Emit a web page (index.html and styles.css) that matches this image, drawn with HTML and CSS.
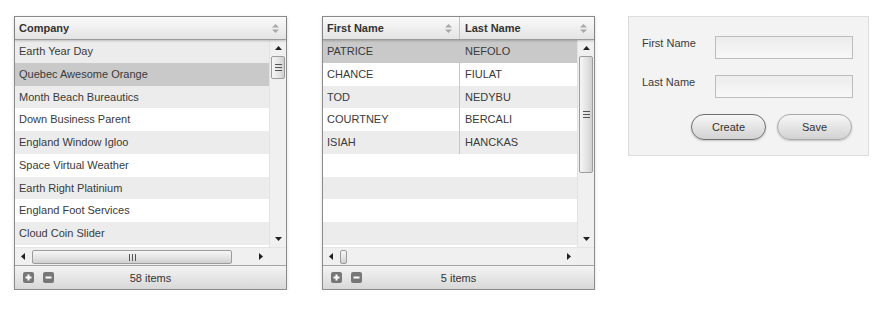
FILE: index.html
```html
<!DOCTYPE html>
<html lang="en">
<head>
    <meta charset="UTF-8">
    <title>Grids and form</title>
    <link rel="stylesheet" href="styles.css">
</head>
<body>
    <div class="page">
        <!-- companies grid -->
        <div class="grid">
            <div class="grid-head">
                <div class="col-head wide">Company
                    <svg class="sort" width="7" height="9" viewBox="0 0 7 9"><path d="M3.5 0L7 3.5H0z M3.5 9L0 5.5H7z" fill="#a8a8a8"/></svg>
                </div>
            </div>
            <div class="grid-body">
                <div class="rows">
                    <div class="row"><span class="cell">Earth Year Day</span></div>
                    <div class="row selected"><span class="cell">Quebec Awesome Orange</span></div>
                    <div class="row"><span class="cell">Month Beach Bureautics</span></div>
                    <div class="row"><span class="cell">Down Business Parent</span></div>
                    <div class="row"><span class="cell">England Window Igloo</span></div>
                    <div class="row"><span class="cell">Space Virtual Weather</span></div>
                    <div class="row"><span class="cell">Earth Right Platinium</span></div>
                    <div class="row"><span class="cell">England Foot Services</span></div>
                    <div class="row"><span class="cell">Cloud Coin Slider</span></div>
                    <div class="row"><span class="cell"></span></div>
                </div>
                <div class="vscroll">
                    <div class="arrow"><svg width="7" height="4"><path d="M3.5 0L7 4H0z" fill="#222"/></svg></div>
                    <div class="vtrack">
                        <div class="vthumb small"><svg width="7" height="7"><path d="M0 .5H7M0 3.5H7M0 6.5H7" stroke="#555"/></svg></div>
                    </div>
                    <div class="arrow"><svg width="7" height="4"><path d="M0 0H7L3.5 4z" fill="#222"/></svg></div>
                </div>
            </div>
            <div class="hscroll">
                <div class="harrow"><svg width="4" height="7"><path d="M0 3.5L4 0V7z" fill="#222"/></svg></div>
                <div class="htrack">
                    <div class="hthumb long"><svg width="7" height="7"><path d="M.5 0V7M3.5 0V7M6.5 0V7" stroke="#555"/></svg></div>
                </div>
                <div class="harrow"><svg width="4" height="7"><path d="M4 3.5L0 0V7z" fill="#222"/></svg></div>
                <div class="corner"></div>
            </div>
            <div class="grid-foot">
                <div class="tools">
                    <svg width="11" height="11" viewBox="0 0 11 11"><rect width="11" height="11" rx="2" fill="#777"/><path d="M5.5 2.5V8.5M2.5 5.5H8.5" stroke="#fff" stroke-width="2"/></svg>
                    <svg width="11" height="11" viewBox="0 0 11 11"><rect width="11" height="11" rx="2" fill="#777"/><path d="M2.5 5.5H8.5" stroke="#fff" stroke-width="2"/></svg>
                </div>
                <span class="count">58 items</span>
            </div>
        </div>

        <!-- people grid -->
        <div class="grid">
            <div class="grid-head">
                <div class="col-head first">First Name
                    <svg class="sort" width="7" height="9" viewBox="0 0 7 9"><path d="M3.5 0L7 3.5H0z M3.5 9L0 5.5H7z" fill="#a8a8a8"/></svg>
                </div>
                <div class="col-head wide second">Last Name
                    <svg class="sort" width="7" height="9" viewBox="0 0 7 9"><path d="M3.5 0L7 3.5H0z M3.5 9L0 5.5H7z" fill="#a8a8a8"/></svg>
                </div>
            </div>
            <div class="grid-body">
                <div class="rows">
                    <div class="row selected"><span class="cell first">PATRICE</span><span class="cell">NEFOLO</span></div>
                    <div class="row"><span class="cell first">CHANCE</span><span class="cell">FIULAT</span></div>
                    <div class="row"><span class="cell first">TOD</span><span class="cell">NEDYBU</span></div>
                    <div class="row"><span class="cell first">COURTNEY</span><span class="cell">BERCALI</span></div>
                    <div class="row"><span class="cell first">ISIAH</span><span class="cell">HANCKAS</span></div>
                    <div class="row"><span class="cell first"></span><span class="cell"></span></div>
                    <div class="row"><span class="cell first"></span><span class="cell"></span></div>
                    <div class="row"><span class="cell first"></span><span class="cell"></span></div>
                    <div class="row"><span class="cell first"></span><span class="cell"></span></div>
                    <div class="row"><span class="cell first"></span><span class="cell"></span></div>
                </div>
                <div class="vscroll">
                    <div class="arrow"><svg width="7" height="4"><path d="M3.5 0L7 4H0z" fill="#222"/></svg></div>
                    <div class="vtrack">
                        <div class="vthumb big"><svg width="7" height="7"><path d="M0 .5H7M0 3.5H7M0 6.5H7" stroke="#555"/></svg></div>
                    </div>
                    <div class="arrow"><svg width="7" height="4"><path d="M0 0H7L3.5 4z" fill="#222"/></svg></div>
                </div>
            </div>
            <div class="hscroll">
                <div class="harrow"><svg width="4" height="7"><path d="M0 3.5L4 0V7z" fill="#222"/></svg></div>
                <div class="htrack">
                    <div class="hthumb tiny"></div>
                </div>
                <div class="harrow"><svg width="4" height="7"><path d="M4 3.5L0 0V7z" fill="#222"/></svg></div>
                <div class="corner"></div>
            </div>
            <div class="grid-foot">
                <div class="tools">
                    <svg width="11" height="11" viewBox="0 0 11 11"><rect width="11" height="11" rx="2" fill="#777"/><path d="M5.5 2.5V8.5M2.5 5.5H8.5" stroke="#fff" stroke-width="2"/></svg>
                    <svg width="11" height="11" viewBox="0 0 11 11"><rect width="11" height="11" rx="2" fill="#777"/><path d="M2.5 5.5H8.5" stroke="#fff" stroke-width="2"/></svg>
                </div>
                <span class="count">5 items</span>
            </div>
        </div>

        <!-- edit form -->
        <div class="form">
            <div class="field">
                <label>First Name</label>
                <input type="text" class="input">
            </div>
            <div class="field">
                <label>Last Name</label>
                <input type="text" class="input">
            </div>
            <div class="buttons">
                <button class="btn active">Create</button>
                <button class="btn">Save</button>
            </div>
        </div>
    </div>
</body>
</html>
```

FILE: styles.css
```css
body { margin: 0; font-family: "Liberation Sans", Arial, sans-serif; font-size: 11px; color: #3a3a3a; background: #fff; }
.page { display: flex; align-items: flex-start; padding: 16px 0 0 14px; gap: 35px; }

.grid { width: 271px; border: 1px solid #8c8c8c; display: flex; flex-direction: column; box-shadow: 0 1px 3px rgba(0,0,0,0.15); }
.grid-head { display: flex; height: 22px; border-bottom: 1px solid #9a9a9a; background: linear-gradient(#fafafa, #e4e4e4); box-shadow: 0 1px 2px rgba(0,0,0,0.2); position: relative; z-index: 1; }
.col-head { display: flex; align-items: center; justify-content: space-between; padding: 0 7px 0 4px; font-weight: bold; color: #333; }
.col-head.first { width: 125px; border-right: 1px solid #c4c4c4; }
.col-head.wide { flex: 1; }
.col-head.second { padding-left: 5px; }
.sort { display: block; }

.grid-body { display: flex; height: 207px; }
.rows { flex: 1; overflow: hidden; }
.row { display: flex; height: 22.75px; align-items: center; }
.row:nth-child(odd) { background: #ececec; }
.row:nth-child(even) { background: #fff; }
.row.selected { background: #c9c9c9; }
.cell { flex: 1; padding: 0 5px 0 4px; line-height: 22.75px; white-space: nowrap; }
.cell.first { flex: none; width: 127px; border-right: 1px solid #c8c8c8; }
.cell.first + .cell { padding-left: 5px; }

.vscroll { width: 16px; border-left: 1px solid #e2e2e2; background: #f0f0f0; display: flex; flex-direction: column; }
.arrow { height: 16px; display: flex; align-items: center; justify-content: center; }
.vtrack { flex: 1; padding: 0 1px; }
.vthumb { border: 1px solid #9c9c9c; border-radius: 2px; background: linear-gradient(90deg, #f6f6f6, #e2e2e2 60%, #cfcfcf); display: flex; align-items: center; justify-content: center; }
.vthumb.small { height: 21px; }
.vthumb.big { height: 115px; }

.hscroll { display: flex; height: 17px; background: #f0f0f0; border-top: 1px solid #e4e4e4; }
.harrow { width: 16px; display: flex; align-items: center; justify-content: center; }
.htrack { flex: 1; padding: 2px 1px 1px; }
.hthumb { height: 12px; border: 1px solid #9c9c9c; border-radius: 2px; background: linear-gradient(#f6f6f6, #e2e2e2 60%, #cfcfcf); display: flex; align-items: center; justify-content: center; }
.hthumb.long { width: 198px; }
.hthumb.tiny { width: 5px; }
.corner { width: 17px; background: #efefef; }

.grid-foot { height: 23px; border-top: 1px solid #a4a4a4; background: linear-gradient(#f4f4f4, #d8d8d8); display: flex; align-items: center; position: relative; }
.tools { display: flex; gap: 9px; padding-left: 8px; }
.tools svg { display: block; }
.count { position: absolute; left: 0; right: 0; text-align: center; color: #333; }

.form { width: 239px; height: 138px; margin-left: -2px; border: 1px solid #dcdcdc; background: #f3f3f3; }
.field { display: flex; align-items: flex-start; padding: 19px 14px 0 13px; }
.field + .field { padding-top: 16px; }
.field label { width: 73px; padding-top: 1px; }
.input { width: 138px; height: 23px; margin: 0; padding: 0; border: 1px solid #bdbdbd; background: linear-gradient(#ececec, #f8f8f8); box-sizing: border-box; }
.buttons { display: flex; justify-content: flex-end; gap: 11px; padding: 16px 16px 0 0; }
.btn { width: 75px; height: 26px; border: 1px solid #a8a8a8; border-radius: 13px; background: linear-gradient(#f7f7f7, #d2d2d2); font-family: "Liberation Sans", Arial, sans-serif; font-size: 11px; color: #333; box-shadow: 0 1px 2px rgba(0,0,0,0.2); padding: 0; }
.btn.active { border-color: #6e6e6e; }
```
